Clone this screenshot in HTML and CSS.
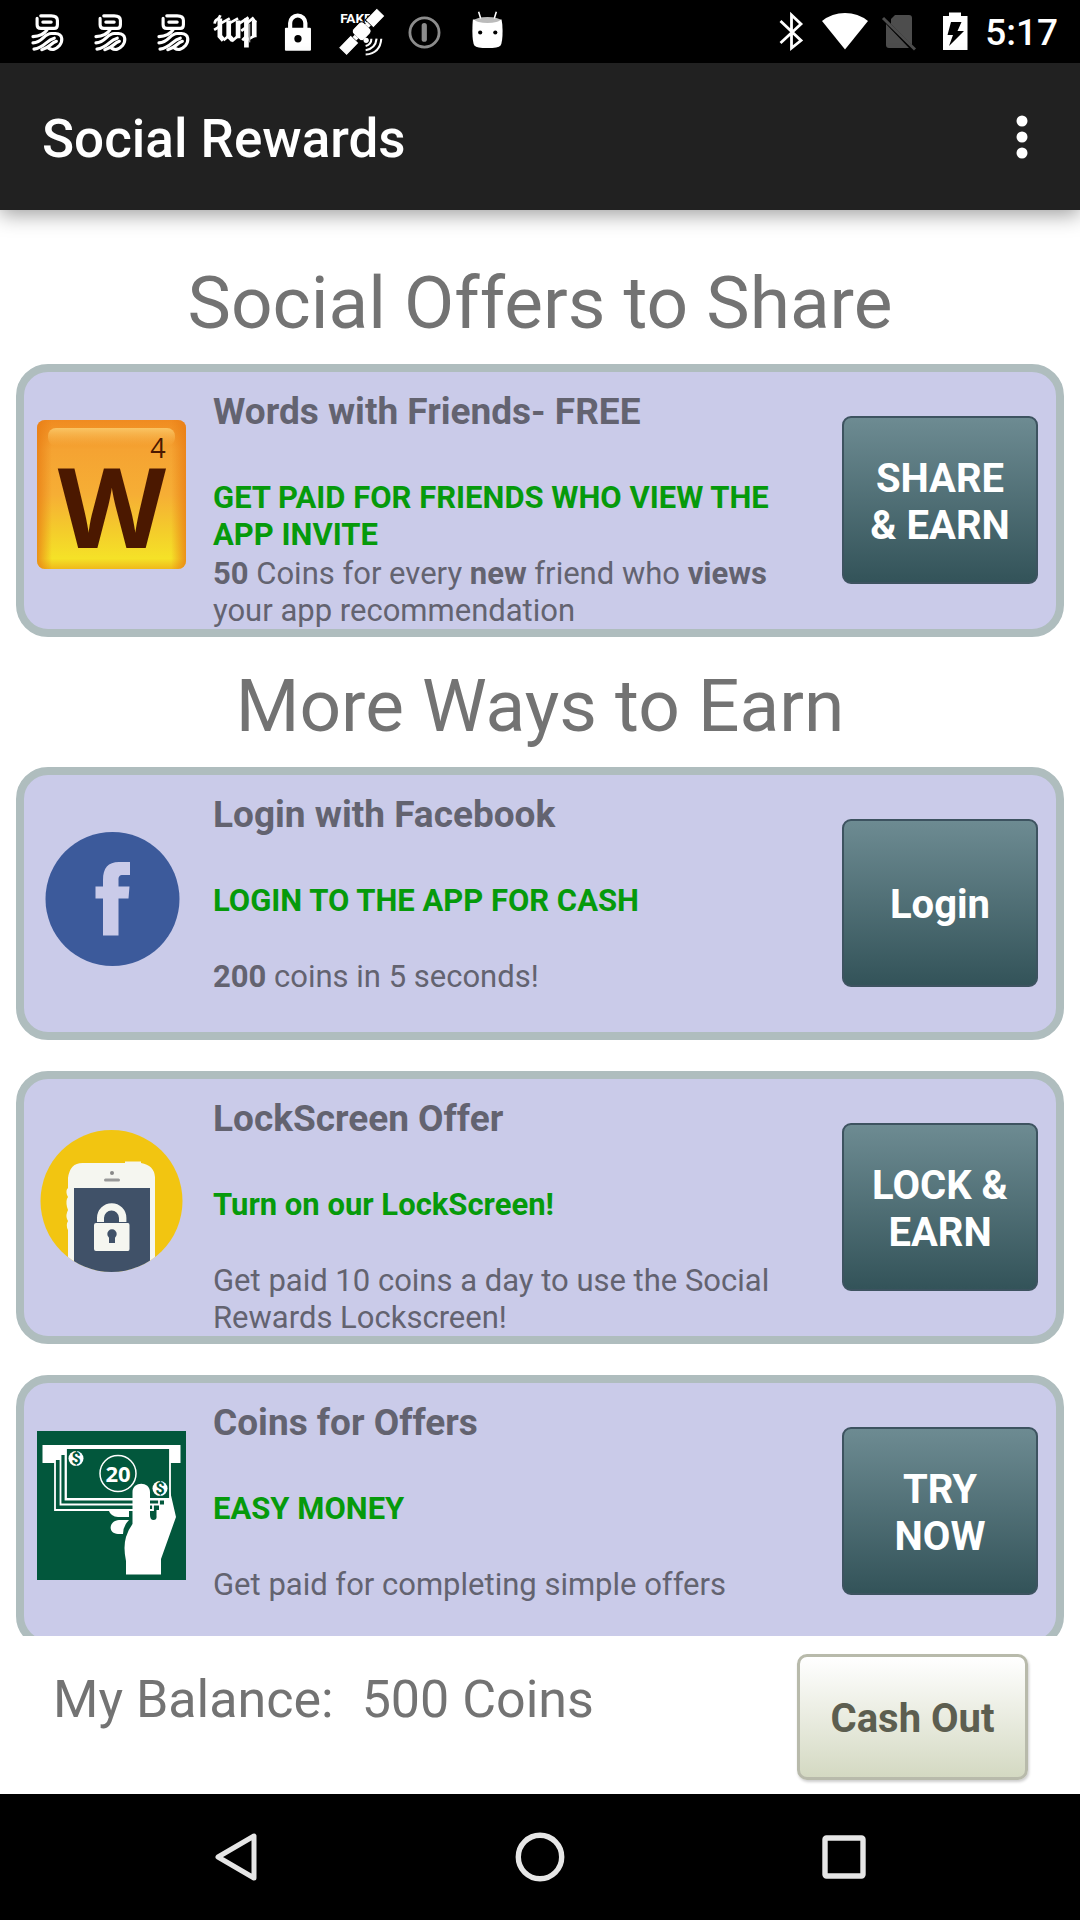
FILE: index.html
```html
<!DOCTYPE html>
<html lang="en">
<head>
<meta charset="utf-8">
<meta name="viewport" content="width=device-width, initial-scale=1">
<title>Social Rewards</title>
<link rel="stylesheet" href="styles.css">
</head>
<body>
<svg class="defs" width="0" height="0" aria-hidden="true">
  <symbol id="swirl" viewBox="0 0 48 48">
    <g fill="none" stroke="#fff" stroke-width="3" stroke-linecap="round" stroke-linejoin="round">
      <path d="M14.500 10V16Q14.500 19.500 18 19.500H31Q34 19.500 34 16V12Q34 7.500 28 7.500H18"/>
      <path d="M20 13.500H28"/>
      <path d="M10.500 27.500Q20 27 24 21"/>
      <path d="M10.500 33.500C20 33 21 24.500 28 24.500H32C40 25 39 32 36 36C33 39.500 29 41 25.500 38.500"/>
      <path d="M11.500 39.500C22 38 23 31 31 29"/>
      <path d="M19 40C27 38 27 34 33 32"/>
    </g>
  </symbol>
</svg>

<div class="status-bar">
  <div class="status-group notifications">
    <svg class="status-icon"><use href="#swirl"/></svg>
    <svg class="status-icon"><use href="#swirl"/></svg>
    <svg class="status-icon"><use href="#swirl"/></svg>
    <svg class="status-icon" viewBox="0 0 48 48">
      <g fill="none" stroke="#fff">
        <path stroke-width="4.500" d="M8.500 10V27L12 31M17 12V27L21 31M26 12V29M34 10V38M41.500 12V28"/>
        <path stroke-width="2.600" d="M3.500 15C4 9 7 13 9 7M3 21L8 18M9 15L18 10M12 31L18 26M17 15L26 10M20 32L27 26M27 15L36 9M29 22L33 19M30 31L34 27M34 15L40 10L43 14M34 31L43 26"/>
        <path stroke-width="1.500" d="M37 15V33" stroke="#999"/>
      </g>
    </svg>
    <svg class="status-icon" viewBox="0 0 48 48">
      <path d="M15.500 20V14.500a7.300 7.300 0 0 1 14.600 0V20" fill="none" stroke="#fff" stroke-width="4"/>
      <rect x="10.500" y="19" width="25" height="22" rx="1" fill="#fff"/><circle cx="23" cy="29.500" r="3.500" fill="#000"/>
    </svg>
    <svg class="status-icon" viewBox="0 0 48 48">
      <text x="3" y="14.500" class="fake-label">FAKE</text>
      <g transform="rotate(-46 23 23)" fill="#fff" stroke="#000" stroke-width="1">
        <rect x="-3" y="18" width="17" height="11"/><rect x="34" y="18" width="16" height="11"/>
        <rect x="16.500" y="15.500" width="15" height="15" rx="4"/>
        <path d="M14 23H17M31 23H34" stroke="#fff" stroke-width="5"/>
      </g>
      <circle cx="28" cy="31" r="2.500" fill="#fff"/>
      <path d="M33 29.500Q33 35 27.500 36.500M38 29.500Q37 39 27.500 40.500M42.500 29.500Q41.500 43.500 27.500 44.700" fill="none" stroke="#fff" stroke-width="2"/>
    </svg>
    <svg class="status-icon" viewBox="0 0 48 48">
      <circle cx="23.500" cy="23.500" r="14" fill="none" stroke="#8c8c8c" stroke-width="2.700"/>
      <path d="M23.300 17V30" stroke="#8c8c8c" stroke-width="5" stroke-linecap="round"/>
    </svg>
    <svg class="status-icon" viewBox="0 0 48 48">
      <path d="M9.500 11Q9 15 9 22Q9 33 11 36Q13 38.500 23.500 38.500Q34 38.500 36 36Q38 33 38 22Q38 15 37 11Z" fill="#fff"/>
      <ellipse cx="23.500" cy="11.500" rx="12" ry="2.800" fill="#bbb"/>
      <path d="M15 3.500L17 10M32 3.500L30 10" stroke="#fff" stroke-width="1.500"/>
      <circle cx="16.500" cy="23.500" r="2" fill="#000"/><circle cx="31" cy="23.500" r="2" fill="#000"/>
    </svg>
  </div>
  <div class="status-group system">
    <svg class="status-icon" viewBox="0 0 48 48">
      <path d="M13.500 13L34 32.500L24.500 40V7L34 16L13.500 35" fill="none" stroke="#fff" stroke-width="2.800"/>
    </svg>
    <svg class="status-icon" viewBox="0 0 48 48"><path d="M24 41.500L1 13Q11 5 24 5T47 13Z" fill="#fff"/></svg>
    <svg class="status-icon" viewBox="0 0 48 48">
      <path d="M20 7H34Q37 7 37 10V37L16 16V11ZM11 16L34 40H14Q11 40 11 37Z" fill="#4d4d4d"/>
      <path d="M8 10L40 41.500" stroke="#4d4d4d" stroke-width="3"/>
    </svg>
    <svg class="status-icon" viewBox="0 0 48 48">
      <path d="M14 8H20V4.500H32V8H38.500V42H14Z" fill="#fff"/>
      <path d="M22 14H32.500L28.500 23H35L20 38L24 27H18.500Z" fill="#000"/>
    </svg>
    <span class="clock">5:17</span>
  </div>
</div>

<header class="app-bar">
  <h1 class="app-title">Social Rewards</h1>
  <button class="icon-button" type="button" aria-label="More options">
    <svg width="12" height="44" viewBox="0 0 12 44"><g fill="#fff"><circle cx="6" cy="6" r="5.500"/><circle cx="6" cy="22" r="5.500"/><circle cx="6" cy="38" r="5.500"/></g></svg>
  </button>
</header>

<main class="content">
  <h2 class="section-title section-title-first">Social Offers to Share</h2>
  <div class="offers">
    <article class="offer">
      <svg class="offer-icon" viewBox="0 0 149 149">
        <defs>
          <linearGradient id="tile" x2="0" y2="1"><stop offset="0" stop-color="#f08b20"/><stop offset=".2" stop-color="#f5a332"/><stop offset=".5" stop-color="#f6ae35"/><stop offset=".75" stop-color="#f4cd2b"/><stop offset=".93" stop-color="#f5e227"/><stop offset="1" stop-color="#efb91b"/></linearGradient>
          <linearGradient id="tile-edge"><stop offset="0" stop-color="#e87d14" stop-opacity=".8"/><stop offset=".1" stop-color="#e87d14" stop-opacity="0"/><stop offset=".9" stop-color="#e87d14" stop-opacity="0"/><stop offset="1" stop-color="#e87d14" stop-opacity=".8"/></linearGradient>
          <linearGradient id="gloss" x2="0" y2="1"><stop offset="0" stop-color="#fac564"/><stop offset="1" stop-color="#f8b94f" stop-opacity="0"/></linearGradient>
        </defs>
        <rect width="149" height="149" rx="8" fill="url(#tile)"/>
        <rect width="149" height="149" rx="8" fill="url(#tile-edge)"/>
        <rect x="11" y="8" width="127" height="18" rx="8" fill="url(#gloss)"/>
        <text x="75" y="128" class="tile-letter">W</text>
        <text x="121" y="38" class="tile-score">4</text>
      </svg>
      <div class="offer-text">
        <h3 class="offer-title">Words with Friends- FREE</h3>
        <p class="offer-pitch">GET PAID FOR FRIENDS WHO VIEW THE APP INVITE</p>
        <p class="offer-detail"><b>50</b> Coins for every <b>new</b> friend who <b>views</b> your app recommendation</p>
      </div>
      <button class="offer-button" type="button">SHARE<br>&amp; EARN</button>
    </article>
  </div>

  <h2 class="section-title">More Ways to Earn</h2>
  <div class="offers">
    <article class="offer">
      <svg class="offer-icon" viewBox="0 0 149 149">
        <circle cx="75.500" cy="76" r="67" fill="#3c5a9b"/>
        <path d="M66 112.500V75.500H58.500V63.500H66V57C66 45 71 39 82 39H93V52H86C82 52 81.500 54 81.500 57V63.500H92.500L91.500 75.500H81.500V112.500Z" fill="#cacbe9"/>
      </svg>
      <div class="offer-text">
        <h3 class="offer-title">Login with Facebook</h3>
        <p class="offer-pitch">LOGIN TO THE APP FOR CASH</p>
        <p class="offer-detail"><b>200</b> coins in 5 seconds!</p>
      </div>
      <button class="offer-button" type="button">Login</button>
    </article>

    <article class="offer">
      <svg class="offer-icon" viewBox="0 0 149 149">
        <defs><clipPath id="disc"><circle cx="74.500" cy="74" r="71"/></clipPath></defs>
        <g clip-path="url(#disc)">
          <rect width="149" height="149" fill="#f2c511"/>
          <path d="M31 150V51Q33 35 47 36H88V34.500H104V36Q117 38 118 50V150Z" fill="#f5f6f0"/>
          <path d="M31 61Q28.500 63 30 68L31 70Q28.500 73 30 80L31 83Q28.500 88 30 92L31 94Q28.500 98 31 103Z" fill="#f5f6f0"/>
          <circle cx="75" cy="46" r="2" fill="#888"/><rect x="67" y="51.500" width="16" height="3" rx="1.500" fill="#999"/>
          <rect x="37" y="61" width="76" height="90" fill="#405168"/>
          <path d="M60 95V91a14.700 14.700 0 0 1 29.400 0V95H82V91a7.500 7.500 0 0 0-15 0V95ZM59 96H91Q92.500 96 92.500 98V122Q92.500 124 91 124H59Q57 124 57 122V98Q57 96 59 96Z" fill="#f5f6f0"/>
          <circle cx="75" cy="107" r="4.700" fill="#405168"/><path d="M72 109H78V116H72Z" fill="#405168"/>
        </g>
      </svg>
      <div class="offer-text">
        <h3 class="offer-title">LockScreen Offer</h3>
        <p class="offer-pitch">Turn on our LockScreen!</p>
        <p class="offer-detail">Get paid 10 coins a day to use the Social Rewards Lockscreen!</p>
      </div>
      <button class="offer-button" type="button">LOCK &amp;<br>EARN</button>
    </article>

    <article class="offer">
      <svg class="offer-icon" viewBox="0 0 149 149">
        <rect width="149" height="149" fill="#02573c"/>
        <rect x="5.500" y="14" width="138" height="18" fill="#fff"/>
        <g fill="#02573c" stroke="#fff" stroke-width="1.800">
          <path d="M18 28V79H116V28Z"/><path d="M23.500 23V73.500H122V23Z"/><path d="M28.500 18V68.500H128V18Z"/>
          <path d="M29 17H133V68H29Z"/>
        </g>
        <circle cx="81" cy="42.500" r="18" fill="none" stroke="#fff" stroke-width="1.500"/>
        <text x="81" y="51" class="bill-value">20</text>
        <circle cx="39" cy="27.500" r="7.500" fill="#fff"/><circle cx="123" cy="57.500" r="7.500" fill="#fff"/>
        <text x="39" y="33" class="bill-sign">$</text><text x="123" y="63" class="bill-sign">$</text>
        <path d="M95.500 61C95.500 50 113 50 113 61V84Q113 89 116.500 89T119.500 85V79H122V73.500H127V68H133V60L139 86L124 128V143.500H89V130Q86 116 89 106Q91 99 95.500 93Z" fill="#fff"/>
        <path d="M71 78H92V86H81Q74 86 71 78ZM92 89Q86 95 86 103H81C71 103 71 90 82 89Z" fill="#fff"/>
      </svg>
      <div class="offer-text">
        <h3 class="offer-title">Coins for Offers</h3>
        <p class="offer-pitch">EASY MONEY</p>
        <p class="offer-detail">Get paid for completing simple offers</p>
      </div>
      <button class="offer-button" type="button">TRY<br>NOW</button>
    </article>
  </div>
</main>

<footer class="balance-bar">
  <p class="balance"><span>My Balance:</span><span>500 Coins</span></p>
  <button class="cash-button" type="button">Cash Out</button>
</footer>

<nav class="nav-bar" aria-label="System">
  <button class="nav-button" type="button" aria-label="Back">
    <svg width="60" height="60" viewBox="0 0 60 60"><path d="M48 9V51L12 30Z" fill="none" stroke="#e6e6e6" stroke-width="5" stroke-linejoin="round"/></svg>
  </button>
  <button class="nav-button" type="button" aria-label="Home">
    <svg width="60" height="60" viewBox="0 0 60 60"><circle cx="30" cy="30" r="21.700" fill="none" stroke="#e6e6e6" stroke-width="5.400"/></svg>
  </button>
  <button class="nav-button" type="button" aria-label="Recent apps">
    <svg width="60" height="60" viewBox="0 0 60 60"><rect x="11" y="11" width="38" height="38" rx="1.500" fill="none" stroke="#e6e6e6" stroke-width="5.400"/></svg>
  </button>
</nav>
</body>
</html>
```

FILE: styles.css
```css
* {
  box-sizing: border-box;
}

body {
  margin: 0;
  height: 100vh;
  display: flex;
  flex-direction: column;
  background: #fff;
  color: #737373;
  font-family: Roboto, "Liberation Sans", sans-serif;
}

h1, h2, h3, p {
  margin: 0;
}

button {
  font-family: inherit;
  cursor: pointer;
}

.defs {
  position: absolute;
}

/* System status bar */
.status-bar {
  flex: none;
  height: 63px;
  padding: 0 22px;
  display: flex;
  align-items: center;
  justify-content: space-between;
  background: #000;
}

.status-group {
  display: flex;
  align-items: center;
}

.notifications {
  padding-top: 3px;
  gap: 13px;
}

.system {
  gap: 6px;
}

.status-icon {
  width: 48px;
  height: 48px;
}

.notifications .status-icon {
  width: 50px;
  height: 50px;
}

.fake-label {
  fill: #fff;
  font-size: 13px;
  font-weight: 700;
}

.clock {
  margin-left: 2px;
  padding-top: 2px;
  color: #fff;
  font-size: 37px;
  font-weight: 500;
  line-height: 42px;
}

/* App bar */
.app-bar {
  flex: none;
  position: relative;
  height: 147px;
  padding: 0 42px;
  display: flex;
  align-items: center;
  justify-content: space-between;
  background: #212121;
  box-shadow: 0 4px 20px rgba(0, 0, 0, 0.4);
}

.app-title {
  padding-top: 4px;
  color: #fff;
  font-size: 53px;
  font-weight: 500;
  line-height: 62px;
}

.icon-button {
  width: 32px;
  padding: 0;
  border: 0;
  background: none;
}

.icon-button svg {
  display: block;
  margin: 0 auto;
}

/* Offer list */
.content {
  flex: 1;
  min-height: 0;
  padding: 0 16px 32px;
  overflow-y: auto;
  scrollbar-width: none;
}

.section-title {
  padding: 26px 0 18px;
  font-size: 73px;
  font-weight: 400;
  line-height: 86px;
  text-align: center;
}

.section-title-first {
  padding-top: 50px;
}

.offers {
  display: flex;
  flex-direction: column;
  gap: 31px;
}

.offer {
  min-height: 273px;
  padding: 0 18px 0 13px;
  display: grid;
  grid-template-columns: 149px 1fr 196px;
  column-gap: 27px;
  align-items: start;
  border: 8px solid #afbdbe;
  border-radius: 32px;
  background: #cacbe9;
}

.offer-icon {
  width: 149px;
  height: 149px;
  margin-top: 48px;
  overflow: visible;
}

.offer-text {
  padding-top: 18px;
  color: #636370;
}

.offer-title {
  margin-bottom: 46px;
  font-size: 37px;
  font-weight: 700;
  line-height: 43px;
}

.offer-pitch {
  min-height: 74px;
  margin-bottom: 2px;
  color: #069a0b;
  font-size: 31px;
  font-weight: 700;
  line-height: 37px;
}

.offer-detail {
  font-size: 31px;
  line-height: 37px;
}

.offer-button {
  height: 168px;
  margin-top: 44px;
  padding: 3px 0 0;
  border: 2px solid #3d5360;
  border-radius: 9px;
  background: linear-gradient(#6d8b92, #335359);
  color: #fff;
  font-size: 40px;
  font-weight: 700;
  line-height: 47px;
}

.tile-letter {
  fill: #4b1800;
  font-family: "Open Sans", sans-serif;
  font-size: 112px;
  font-weight: 700;
  text-anchor: middle;
}

.tile-score {
  fill: #4b1800;
  font-family: "Open Sans", sans-serif;
  font-size: 27px;
  font-weight: 500;
  text-anchor: middle;
}

.bill-value {
  fill: #fff;
  font-family: "Open Sans", sans-serif;
  font-size: 22px;
  font-weight: 700;
  text-anchor: middle;
}

.bill-sign {
  fill: #02573c;
  font-size: 16px;
  font-weight: 700;
  text-anchor: middle;
}

/* Balance */
.balance-bar {
  flex: none;
  padding: 18px 52px 14px 53px;
  display: flex;
  align-items: flex-start;
  justify-content: space-between;
  background: #fff;
}

.balance {
  padding-top: 15px;
  display: flex;
  gap: 28px;
  font-size: 52px;
  line-height: 62px;
}

.cash-button {
  width: 231px;
  height: 126px;
  padding: 3px 0 0;
  border: 3px solid #b8baab;
  border-radius: 10px;
  background: linear-gradient(#fff, #d4d9c2);
  box-shadow: 1px 2px 3px rgba(0, 0, 0, 0.2);
  color: #5c5e50;
  font-size: 40px;
  font-weight: 700;
}

/* System navigation */
.nav-bar {
  flex: none;
  height: 126px;
  padding: 0 84px;
  display: grid;
  grid-template-columns: repeat(3, 1fr);
  background: #000;
}

.nav-button {
  padding: 0;
  border: 0;
  background: none;
}

.nav-button svg {
  display: block;
  margin: 0 auto;
}
```
